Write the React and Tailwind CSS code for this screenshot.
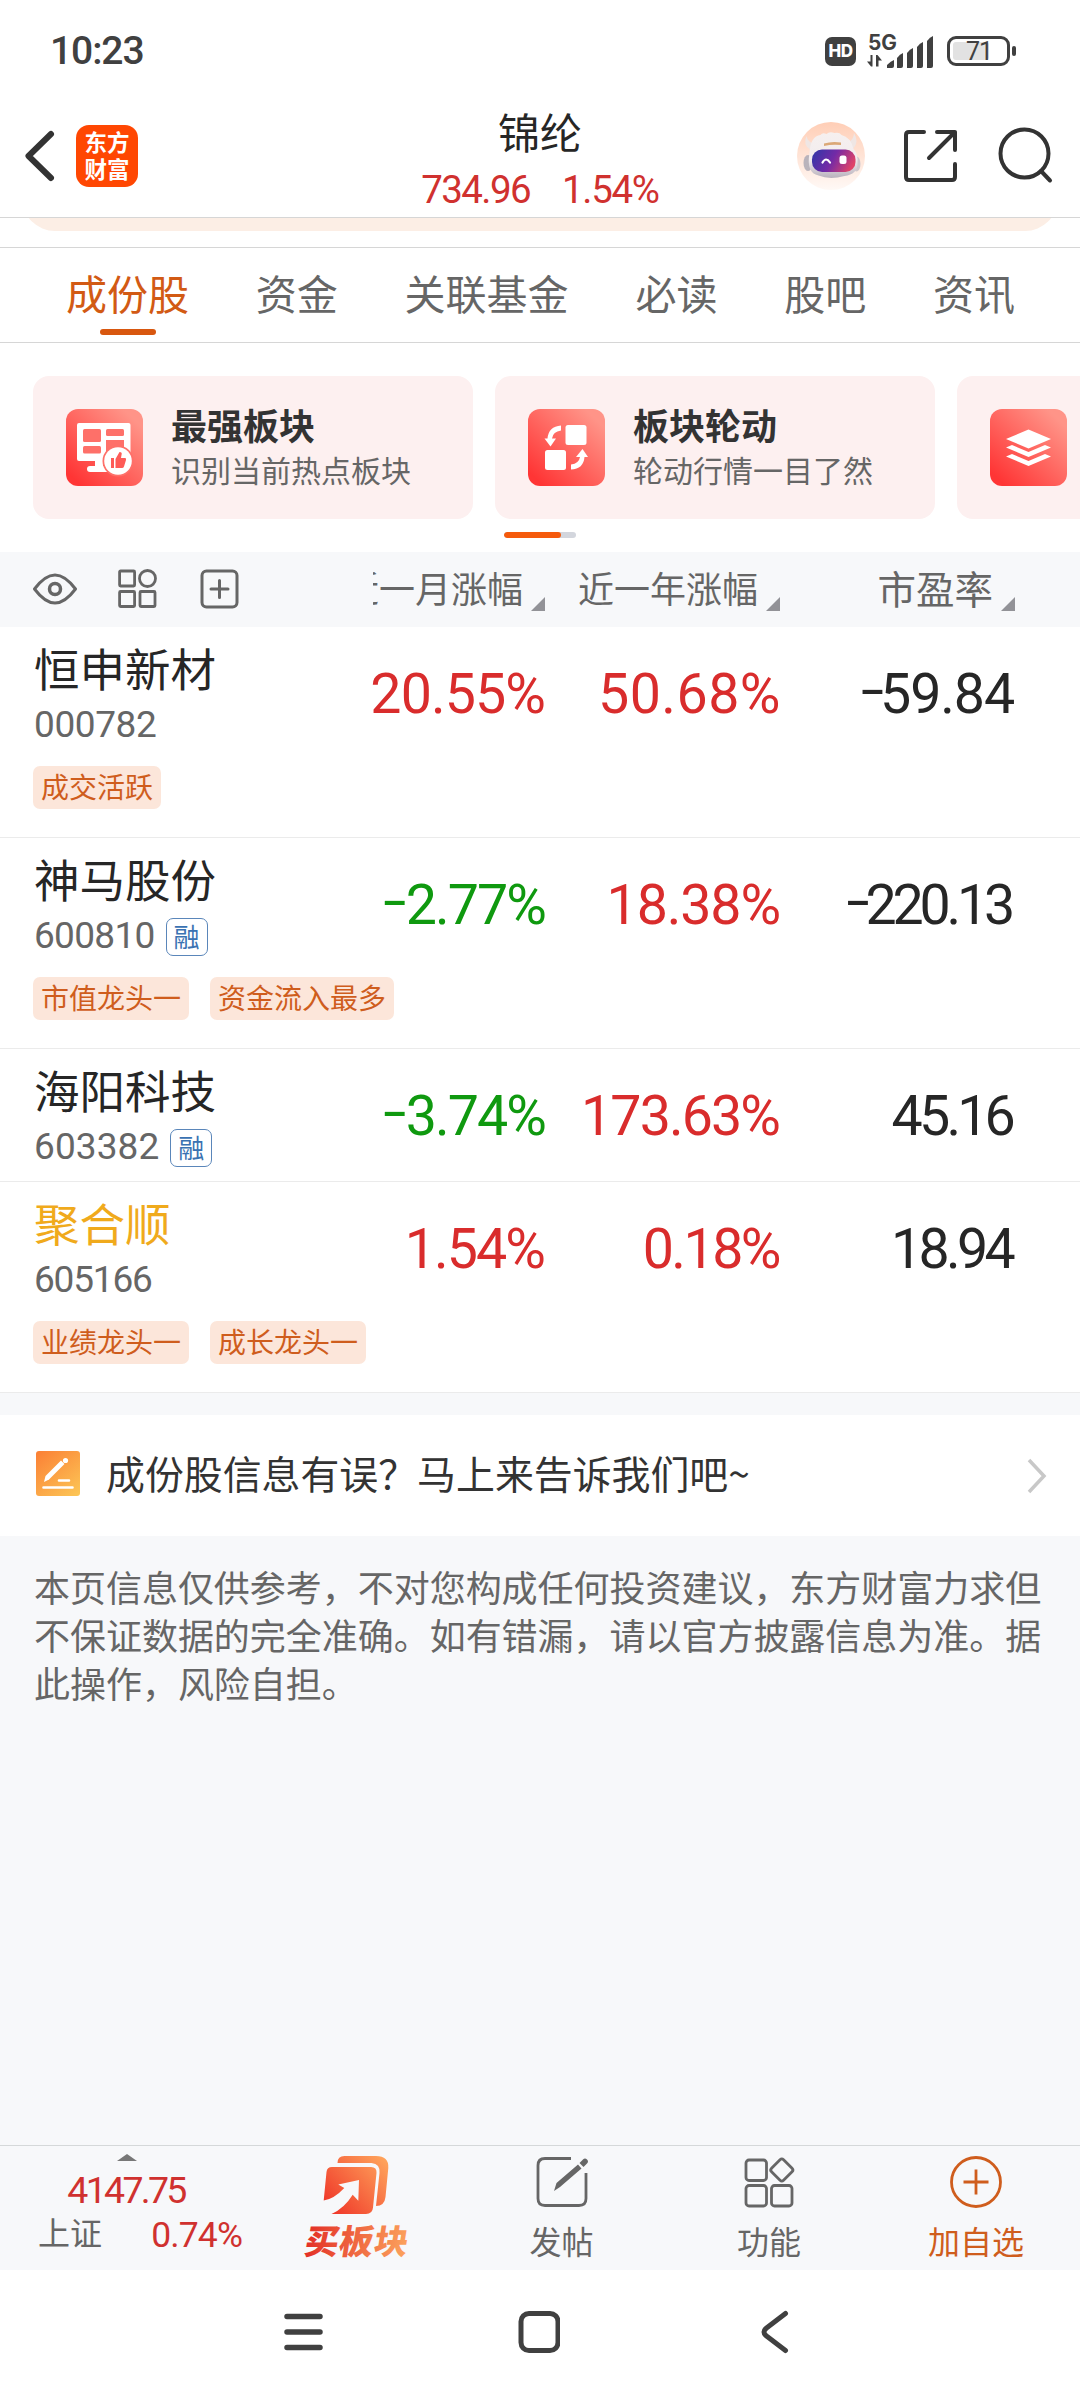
function StatusBar() {
  return (
    <div className="flex h-[102px] items-center pl-[50px] pr-[64px] text-[#404040]">
      <span className="font-[Roboto,sans-serif] text-[39px] font-medium leading-none tracking-[-1.100px]">10:23</span>
      <div className="ml-auto flex items-center">
        <div className="flex h-[29px] w-[31px] items-center justify-center rounded-[7px] bg-[#404040] font-[Inter,sans-serif] text-[17px] font-extrabold leading-none tracking-[-0.5px] text-white">HD</div>
        <div className="ml-[11px] flex h-[36px] w-[68px] flex-col">
          <svg className="overflow-visible" width="68" height="36" viewBox="0 0 68 36">
            <text x="1" y="17" fontFamily="Inter, sans-serif" fontWeight="700" fontSize="21" textLength="29" lengthAdjust="spacingAndGlyphs" fill="#404040">5G</text>
            <g fill="#404040">
              <path d="M5.500 22V33.500H4L0 28.500H3.500V22zM9 33.500V22h1.500L15 27.500H11.500V33.500z" />
              <path d="M20 32q4-4 7-5v6q0 2-2 2h-5z" />
              <path d="M30 25q3-4 6-5v13q0 2-2 2h-4z" />
              <path d="M40 20q3-4 6-5v18q0 2-2 2h-4z" />
              <path d="M50 14q3-4 6-5v24q0 2-2 2h-4z" />
              <path d="M60 8q3-4 6-5v30q0 2-2 2h-4z" />
            </g>
          </svg>
        </div>
        <div className="ml-[12px] flex h-[30px] w-[63px] rounded-[9px] border-[3px] border-[#404040] p-[3px]">
          <div className="flex h-[18px] w-[36px] items-center rounded-[3px] bg-[#e2e2e2] pl-[13px] font-[Roboto,sans-serif] text-[25px] leading-none tracking-[-1px]">71</div>
        </div>
        <div className="ml-[2px] h-[10px] w-[4px] rounded-[2px] bg-[#404040]" />
      </div>
    </div>
  );
}

function Robot() {
  return (
    <svg width="70" height="70" viewBox="0 0 70 70">
      <defs>
        <linearGradient id="halo" x1="0" y1="0" x2="0" y2="1"><stop offset="0" stopColor="#ffceb6" /><stop offset="1" stopColor="#fff9f6" /></linearGradient>
        <linearGradient id="visor" x1="0" y1="0.200" x2="1" y2="0.500"><stop offset="0" stopColor="#3436a8" /><stop offset="0.500" stopColor="#742aa6" /><stop offset="1" stopColor="#e04468" /></linearGradient>
        <linearGradient id="shell" x1="0" y1="0" x2="0" y2="1"><stop offset="0" stopColor="#f6f0ef" /><stop offset="0.600" stopColor="#f2ecee" /><stop offset="1" stopColor="#b9b2bd" /></linearGradient>
      </defs>
      <circle cx="35" cy="35" r="34" fill="url(#halo)" />
      <path d="M10.500 15q1 6 8 8l-4 6q-8-5-4-14zM58 12q0 7-7 10l4 7q9-6 3-17z" fill="#efe6e4" />
      <ellipse cx="12" cy="42" rx="4.500" ry="8" fill="#b9b3bb" />
      <ellipse cx="60.500" cy="43" rx="4" ry="7.500" fill="#cfc8cc" />
      <path d="M13.500 32q1-17 11-18 2-3 6-1 3-3 8-1 5-1 7 2 9 2 12 14 5 5 4 15 0 10-13 12-15 4-26-0.500Q10 52 13.500 32z" fill="url(#shell)" />
      <path d="M28 22.500q8-2.500 17-1v2.500q-9-1-17 1z" fill="#dba877" />
      <rect x="16" y="28.500" width="43.500" height="22.500" rx="10" fill="url(#visor)" />
      <path d="M26.500 41.500q3.500-6 7.500 0" fill="none" stroke="#fff" strokeWidth="2.200" strokeLinecap="round" />
      <rect x="43.500" y="34.500" width="7" height="8.500" rx="2.500" fill="#fff" />
    </svg>
  );
}

function Header() {
  return (
    <header className="grid h-[116px] grid-cols-3 border-b border-[#d6d6d6]">
      <div className="flex items-start">
        <svg className="ml-[22px] mt-[26px]" width="36" height="56" viewBox="0 0 36 56" fill="none" stroke="#333" strokeWidth="6" strokeLinecap="round" strokeLinejoin="round"><path d="M29 6 6.500 28 29 50" /></svg>
        <div className="ml-[18px] mt-[23px] flex h-[62px] w-[62px] flex-col items-center justify-center rounded-[13px] bg-[#ff4702] pb-[2px] font-['Noto_Sans_CJK_SC',sans-serif] text-[22.5px] font-bold leading-[27px] text-white">
          <span>东方</span><span>财富</span>
        </div>
      </div>
      <div className="flex flex-col items-center pt-[5px]">
        <h1 className="font-['Noto_Sans_CJK_SC',sans-serif] text-[42px] leading-[48px] text-[#262626]">锦纶</h1>
        <div className="mt-[10px] flex gap-[32px] font-[Roboto,sans-serif] text-[38.500px] leading-[50px] text-[#d0312f]">
          <span className="tracking-[-1.600px]">734.96</span><span className="tracking-[-1.300px]">1.54%</span>
        </div>
      </div>
      <div className="flex items-start justify-end pr-[26px] pt-[19px]">
        <Robot />
        <svg className="ml-[36px] mt-[6px]" width="58" height="58" viewBox="0 0 58 58" fill="none" stroke="#333" strokeWidth="4" strokeLinecap="round" strokeLinejoin="round">
          <path d="M22 5H7q-3 0-3 3v42q0 3 3 3h43q3 0 3-3V37M53 23V5H35M53 5 27 31" />
        </svg>
        <svg className="ml-[38px] mt-[5px]" width="56" height="58" viewBox="0 0 56 58" fill="none" stroke="#333" strokeWidth="4" strokeLinecap="round"><circle cx="26.500" cy="27.500" r="24" /><path d="m43 45 9 9.500" /></svg>
      </div>
    </header>
  );
}

const tabs = ["成份股", "资金", "关联基金", "必读", "股吧", "资讯"];

function Tabs() {
  return (
    <nav className="flex h-[96px] justify-between border-y border-[#d6d6d6] pl-[66px] pr-[65px] text-[41px] leading-[88px] text-[#666]">
      {tabs.map((t, i) => (
        <div key={t} className={i === 0 ? "relative text-[#d25a14]" : ""}>
          {t}
          {i === 0 && <span className="absolute bottom-[7px] left-1/2 h-[6px] w-[56px] -translate-x-1/2 rounded-full bg-[#d8570f]" />}
        </div>
      ))}
    </nav>
  );
}

function CardIcon({ kind }) {
  return (
    <svg className="shrink-0" width="77" height="77" viewBox="0 0 77 77">
      <defs>
        <linearGradient id={"red-" + kind} x1="0.150" y1="0.950" x2="0.900" y2="0.150"><stop offset="0" stopColor="#ff3535" /><stop offset="1" stopColor="#ff9488" /></linearGradient>
      </defs>
      <rect width="77" height="77" rx="12" fill={"url(#red-" + kind + ")"} />
      {kind === "strong" && (
        <g>
          <rect x="11" y="14" width="53.500" height="38" rx="2" fill="#fff" />
          <path d="M29 51h8v6h-8z" fill="#fff" /><path d="M24 60h20" stroke="#fff" strokeWidth="6" strokeLinecap="round" />
          <g fill="#fe7069"><rect x="17" y="20" width="18" height="13" rx="1.500" /><rect x="17" y="37" width="18" height="7.500" rx="1.500" /><rect x="40" y="20" width="18" height="7" rx="1.500" /><path d="M40 31h18v14H40z" /></g>
          <circle cx="52" cy="52" r="15.500" fill="#fe7069" /><circle cx="52" cy="52" r="13.800" fill="#fff" />
          <path d="M45 49h3v10h-3zM49.500 59V50l4-7q3 0 2 3l-.500 3h4q1.500 0 1 2l-2 6.500q-.500 1.500-2 1.500z" fill="#fe5b57" />
        </g>
      )}
      {kind === "rotate" && (
        <g fill="#fff">
          <rect x="37.500" y="16" width="21" height="20" rx="2.500" /><rect x="17" y="41" width="21" height="20" rx="2.500" />
          <path d="M33 16.500v5q-8 1-9 8h4l-5.500 8L16.500 29.500h3q1-12 13.500-13z" /><path d="M43 60.500v-5q8-1 9-7.500h-4l6.500-8 5.500 8h-3.500q-1 12-13.500 12.500z" />
        </g>
      )}
      {kind === "layers" && (
        <g fill="#fff">
          <path d="M38.500 20.500 61 30 38.500 39.500 16 30z" /><path d="m16 38.500 6-2.500 16.500 7 16.500-7 6 2.500L38.500 48z" /><path d="m16 47.500 6-2.500 16.500 7 16.500-7 6 2.500L38.500 57z" />
        </g>
      )}
    </svg>
  );
}

const cards = [
  { kind: "strong", title: "最强板块", sub: "识别当前热点板块" },
  { kind: "rotate", title: "板块轮动", sub: "轮动行情一目了然" },
  { kind: "layers", title: "", sub: "" },
];

function Cards() {
  return (
    <section className="h-[209px] overflow-hidden pt-[33px]">
      <div className="flex gap-[22px] pl-[33px]">
        {cards.map((c) => (
          <div key={c.kind} className="flex h-[143px] w-[440px] shrink-0 items-center rounded-[16px] bg-[#fdf0f0] pl-[33px]">
            <CardIcon kind={c.kind} />
            <div className="mb-[4px] ml-[28px]">
              <div className="text-[36px] font-bold leading-[46px] text-[#333]">{c.title}</div>
              <div className="text-[30px] leading-[44px] text-[#666]">{c.sub}</div>
            </div>
          </div>
        ))}
      </div>
      <div className="mx-auto mt-[13px] h-[6px] w-[72px] overflow-hidden rounded-full bg-[#d3d6dd]">
        <div className="h-full w-[57px] rounded-full bg-[#f55a0c]" />
      </div>
    </section>
  );
}

function Corner() {
  return <svg className="mb-[16px] ml-[8px] shrink-0 self-end" width="14" height="14" viewBox="0 0 14 14"><path d="M14 0v14H0z" fill="#929297" /></svg>;
}

const cols = "grid grid-cols-[373px_172px_235px_235px]";

function TableHead() {
  return (
    <div className={cols + " h-[75px] bg-[#f7f8fa] text-[36px] leading-[71px] text-[#666]"}>
      <div className="flex items-center pb-[1px] pl-[33px]">
        <svg width="44" height="32" viewBox="0 0 44 32" fill="none" stroke="#666" strokeWidth="3"><path d="M1.500 16Q12 2 22 2t20.500 14Q32 30 22 30T1.500 16z" strokeLinejoin="round" /><circle cx="22" cy="16" r="5.500" strokeWidth="3.500" /></svg>
        <svg className="ml-[41px]" width="39" height="40" viewBox="0 0 39 40" fill="none" stroke="#666" strokeWidth="2.800"><rect x="1.600" y="2" width="15" height="15" rx="1" /><ellipse cx="29.500" cy="9.500" rx="8" ry="8" /><rect x="1.600" y="22.500" width="15" height="15" rx="1" /><rect x="22" y="22.500" width="15" height="15" rx="1" /></svg>
        <svg className="ml-[43px]" width="39" height="40" viewBox="0 0 39 40" fill="none" stroke="#666" strokeWidth="3"><rect x="2" y="2" width="35" height="36" rx="4.500" /><path d="M11 20h17M19.500 11.500v17" strokeLinecap="round" /></svg>
      </div>
      <div className="flex justify-end overflow-hidden whitespace-nowrap"><span>近一月涨幅</span><Corner /></div>
      <div className="flex justify-end whitespace-nowrap"><span>近一年涨幅</span><Corner /></div>
      <div className="flex justify-end whitespace-nowrap text-[38.500px]"><span>市盈率</span><Corner /></div>
    </div>
  );
}

const rows = [
  {
    name: "恒申新材", code: "000782", codeFit: "tracking-[-0.400px]", tags: ["成交活跃"],
    values: [["20.55%", "tracking-[-0.900px]"], ["50.68%", "tracking-[0.500px] -mr-[1px]"], ["-59.84", "pr-[1px] tracking-[-1.100px]"]],
  },
  {
    name: "神马股份", code: "600810", codeFit: "tracking-[-0.700px]", margin: true, tags: ["市值龙头一", "资金流入最多"],
    values: [["-2.77%", "tracking-[-1.900px]"], ["18.38%", "tracking-[-1.100px]"], ["-220.13", "pr-[4px] tracking-[-4.200px]"]],
  },
  {
    name: "海阳科技", code: "603382", codeFit: "tracking-[0.100px]", margin: true, tags: [],
    values: [["-3.74%", "tracking-[-1.900px]"], ["173.63%", "pr-[1px] tracking-[-1.900px]"], ["45.16", "pr-[3px] tracking-[-3.800px]"]],
  },
  {
    name: "聚合顺", code: "605166", codeFit: "tracking-[-1.200px]", held: true, tags: ["业绩龙头一", "成长龙头一"],
    values: [["1.54%", "pr-[1px] tracking-[-1.900px]"], ["0.18%", "pr-[1px] tracking-[-2.500px]"], ["18.94", "pr-[3px] tracking-[-3.700px]"]],
  },
];

function Value({ text, fit, plain }) {
  const negative = text[0] === "-";
  const color = plain ? "text-[#262626]" : negative ? "text-[#0f990f]" : "text-[#d92c2c]";
  return (
    <div className={"flex justify-end whitespace-nowrap pt-[38px] font-[Roboto,sans-serif] text-[55.500px] leading-[60px] " + color + " " + fit}>
      {negative && <span className={"inline-block origin-right -translate-y-[4px] scale-x-[1.500] " + (text === "-59.84" ? "-mr-[2px]" : "mr-[2px]")}>-</span>}
      <span>{negative ? text.slice(1) : text}</span>
    </div>
  );
}

function Row({ r }) {
  return (
    <div className={(r.tags.length ? "h-[211px]" : "h-[133px]") + " border-b border-[#ebebeb]"}>
      <div className={cols}>
        <div className="pl-[34px] pt-[15px]">
          <div className={"text-[45.500px] leading-[50px] " + (r.held ? "text-[#f0aa1c]" : "text-[#262626]")}>{r.name}</div>
          <div className="mt-[11px] flex h-[44px] items-center">
            <span className={"font-[Roboto,sans-serif] text-[37px] leading-[44px] text-[#666] " + r.codeFit}>{r.code}</span>
            {r.margin && <span className="ml-[11px] mt-[1px] flex h-[38px] w-[42px] items-center justify-center rounded-[7px] border border-[#5a86ba] pb-[2px] text-[26px] leading-none text-[#3a72b2]">融</span>}
          </div>
        </div>
        {r.values.map(([text, fit], i) => <Value key={text} text={text} fit={fit} plain={i === 2} />)}
      </div>
      {r.tags.length > 0 && (
        <div className="mt-[19px] flex gap-[21px] pl-[33px]">
          {r.tags.map((t) => <span key={t} className="h-[43px] rounded-[7px] bg-[#fce6da] px-[8px] text-[28px] leading-[40px] text-[#cf5d1d]">{t}</span>)}
        </div>
      )}
    </div>
  );
}

function Feedback() {
  return (
    <div className="mt-[22px] flex h-[121px] items-center bg-white pb-[4px] pl-[36px] pr-[33px]">
      <svg width="44" height="45" viewBox="0 0 44 45">
        <defs><linearGradient id="note" x1="0.100" y1="0" x2="0.900" y2="1"><stop offset="0" stopColor="#fb8236" /><stop offset="1" stopColor="#fcc455" /></linearGradient></defs>
        <rect width="44" height="45" rx="3" fill="url(#note)" />
        <path d="m8 31 1.500-6L25 9.500l3.500 3.500L13 28.500z" fill="#fff" /><circle cx="29.500" cy="9.500" r="2.600" fill="#fff" />
        <path d="M23 29.500h10M7.500 36.500h29" stroke="#fff" strokeWidth="2.600" strokeLinecap="round" />
      </svg>
      <span className="mb-[4px] ml-[26px] whitespace-nowrap text-[38.900px] leading-[50px] text-[#333]">成份股信息有误？马上来告诉我们吧~</span>
      <svg className="ml-auto mt-[4px]" width="20" height="36" viewBox="0 0 20 36" fill="none" stroke="#c8c8c8" strokeWidth="3.500"><path d="m2 2 15 16L2 34" /></svg>
    </div>
  );
}

function BuyIcon() {
  return (
    <svg className="overflow-visible" width="110" height="114" viewBox="0 0 110 114">
      <defs>
        <linearGradient id="buy" gradientUnits="userSpaceOnUse" x1="24" y1="65" x2="86" y2="10"><stop offset="0" stopColor="#ee2d24" /><stop offset="1" stopColor="#ffa55c" /></linearGradient>
        <linearGradient id="buyText" x1="0" y1="0" x2="1" y2="0"><stop offset="0" stopColor="#e32f26" /><stop offset="1" stopColor="#fca35d" /></linearGradient>
      </defs>
      <path d="M37.500 14q0-7 7-7H76q13 0 12.300 12L85.500 48q-1 9-9.500 9l3.500-33q1-9-8-10z" fill="url(#buy)" />
      <path d="M32 18h39q6 0 5.500 6L73 58.500q-.500 6.500-7 6.500H31.500q13-6 21.200-19.300l5.600 6L59 31l-20.700 4.500 6 3.500Q34 50 23.700 51.500L26.500 23q.500-5 5.500-5z" fill="url(#buy)" />
      <text x="2" y="105" fontFamily="'Noto Sans CJK SC', sans-serif" fontSize="34" fontWeight="900" textLength="103" transform="translate(18 0) skewX(-9)" fill="url(#buyText)">买板块</text>
    </svg>
  );
}

function BottomBar() {
  return (
    <footer className="grid h-[125px] grid-cols-[252px_206px_207px_208px_207px] border-t border-[#d5d8d9] bg-[#f7f8fa]">
      <div className="flex flex-col items-center font-[Roboto,'Noto_Sans_CJK_SC',sans-serif] text-[#d0312f]">
        <svg className="ml-[2px] mt-[8px]" width="20" height="7" viewBox="0 0 20 7"><path d="M10 0 20 7H0z" fill="#777" /></svg>
        <div className="mt-[5px] text-[37.500px] leading-[48px] tracking-[-2.700px]">4147.75</div>
        <div className="flex w-full items-center justify-between pl-[38px] pr-[10px] leading-[38px]">
          <span className="text-[32px] text-[#666]">上证</span><span className="pt-[2px] text-[35.500px] tracking-[-0.900px]">0.74%</span>
        </div>
      </div>
      <div className="flex justify-center pt-[3px]"><BuyIcon /></div>
      <div className="flex flex-col items-center pt-[9px] text-[32px] leading-[40px] text-[#666]">
        <svg width="54" height="54" viewBox="0 0 54 54"><path d="M36 3.500H10q-7 0-7 7v33q0 7 7 7h34q7 0 7-7V18" fill="none" stroke="#666" strokeWidth="2.800" /><path d="m19 36 2.500-8L43 9.500l3.500 4L25 32zM44.500 8 48 4.500q2-2 4 0t0 4L48.500 12z" fill="#666" /></svg>
        <span className="mt-[11px]">发帖</span>
      </div>
      <div className="flex flex-col items-center pt-[9px] text-[32px] leading-[40px] text-[#666]">
        <svg width="54" height="54" viewBox="0 0 54 54" fill="none" stroke="#666" strokeWidth="2.800"><rect x="4" y="5" width="20.500" height="20.500" rx="3" /><rect x="4" y="30.500" width="20.500" height="20.500" rx="3" /><rect x="29.500" y="30.500" width="20.500" height="20.500" rx="3" /><rect x="31.300" y="6.500" width="17" height="17" rx="2.500" transform="rotate(45 39.800 15)" /></svg>
        <span className="mt-[11px]">功能</span>
      </div>
      <div className="flex flex-col items-center pr-[1px] pt-[9px] text-[32px] leading-[40px] text-[#cf5d1d]">
        <svg width="54" height="54" viewBox="0 0 54 54" fill="none" stroke="#cf5d1d" strokeWidth="2.800"><circle cx="27" cy="27" r="24.500" /><path d="M14.500 27h25M27 14.500v25" /></svg>
        <span className="mt-[11px]">加自选</span>
      </div>
    </footer>
  );
}

function SystemNav() {
  return (
    <div className="flex h-[130px] items-start justify-center gap-[194px] bg-white pr-[2px] pt-[40px]">
      <svg width="42" height="44" viewBox="0 0 42 44" stroke="#404040" strokeWidth="5.500" strokeLinecap="round"><path d="M5 6.500h33M5 22h33M5 37.500h33" /></svg>
      <svg width="42" height="44" viewBox="0 0 42 44" fill="none" stroke="#404040" strokeWidth="5"><rect x="3" y="3.500" width="37" height="37" rx="8" /></svg>
      <svg width="42" height="44" viewBox="0 0 42 44" fill="none" stroke="#404040" strokeWidth="5" strokeLinecap="round" strokeLinejoin="round"><path d="M31.500 3.500 12.500 18q-5 4 0 8L31.500 40.500" /></svg>
    </div>
  );
}

export default function App() {
  return (
    <div className="flex h-[2400px] w-[1080px] flex-col overflow-hidden bg-[#f7f8fa] font-['Noto_Sans_CJK_SC',sans-serif]">
      <div className="bg-white">
        <StatusBar />
        <Header />
        <div className="h-[29px] overflow-hidden px-[22px]"><div className="-mt-[60px] h-[73px] rounded-[33px] bg-[#fceee5]" /></div>
        <Tabs />
        <Cards />
        <TableHead />
        <div>{rows.map((r) => <Row key={r.code} r={r} />)}</div>
      </div>
      <Feedback />
      <p className="flex flex-col whitespace-nowrap pl-[34px] pt-[26px] text-[36px] leading-[48.200px] tracking-[-0.030px] text-[#666]">
        <span>本页信息仅供参考，不对您构成任何投资建议，东方财富力求但</span>
        <span>不保证数据的完全准确。如有错漏，请以官方披露信息为准。据</span>
        <span>此操作，风险自担。</span>
      </p>
      <div className="flex-1" />
      <BottomBar />
      <SystemNav />
    </div>
  );
}
